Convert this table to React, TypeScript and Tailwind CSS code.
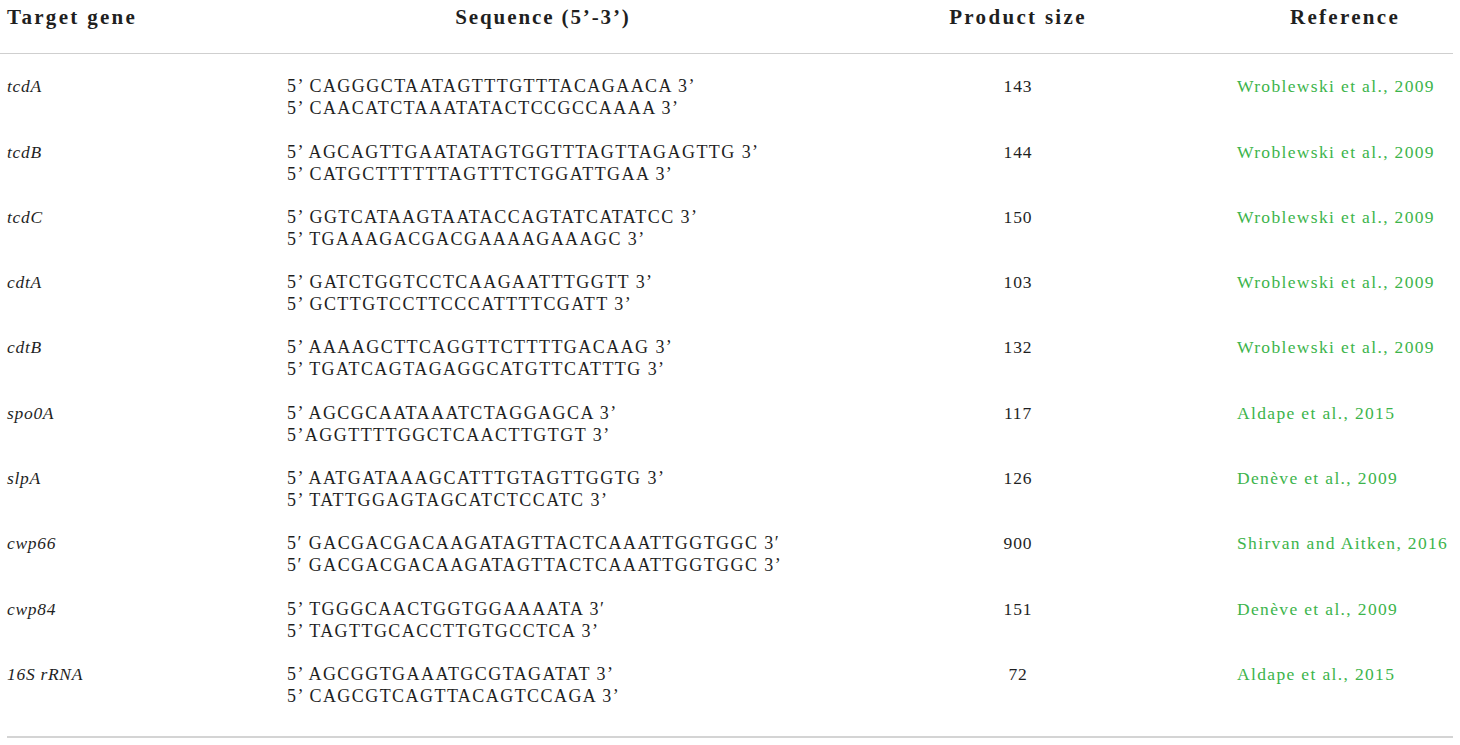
const rows = [
  { gene: "tcdA", seq: ["5’ CAGGGCTAATAGTTTGTTTACAGAACA 3’", "5’ CAACATCTAAATATACTCCGCCAAAA 3’"], size: "143", ref: "Wroblewski et al., 2009" },
  { gene: "tcdB", seq: ["5’ AGCAGTTGAATATAGTGGTTTAGTTAGAGTTG 3’", "5’ CATGCTTTTTTAGTTTCTGGATTGAA 3’"], size: "144", ref: "Wroblewski et al., 2009" },
  { gene: "tcdC", seq: ["5’ GGTCATAAGTAATACCAGTATCATATCC 3’", "5’ TGAAAGACGACGAAAAGAAAGC 3’"], size: "150", ref: "Wroblewski et al., 2009" },
  { gene: "cdtA", seq: ["5’ GATCTGGTCCTCAAGAATTTGGTT 3’", "5’ GCTTGTCCTTCCCATTTTCGATT 3’"], size: "103", ref: "Wroblewski et al., 2009" },
  { gene: "cdtB", seq: ["5’ AAAAGCTTCAGGTTCTTTTGACAAG 3’", "5’ TGATCAGTAGAGGCATGTTCATTTG 3’"], size: "132", ref: "Wroblewski et al., 2009" },
  { gene: "spo0A", seq: ["5’ AGCGCAATAAATCTAGGAGCA 3’", "5’AGGTTTTGGCTCAACTTGTGT 3’"], size: "117", ref: "Aldape et al., 2015" },
  { gene: "slpA", seq: ["5’ AATGATAAAGCATTTGTAGTTGGTG 3’", "5’ TATTGGAGTAGCATCTCCATC 3’"], size: "126", ref: "Denève et al., 2009" },
  { gene: "cwp66", seq: ["5′ GACGACGACAAGATAGTTACTCAAATTGGTGGC 3′", "5′ GACGACGACAAGATAGTTACTCAAATTGGTGGC 3’"], size: "900", ref: "Shirvan and Aitken, 2016" },
  { gene: "cwp84", seq: ["5’ TGGGCAACTGGTGGAAAATA 3′", "5’ TAGTTGCACCTTGTGCCTCA 3’"], size: "151", ref: "Denève et al., 2009" },
  { gene: "16S rRNA", seq: ["5’ AGCGGTGAAATGCGTAGATAT 3’", "5’ CAGCGTCAGTTACAGTCCAGA 3’"], size: "72", ref: "Aldape et al., 2015" },
];

export default function App() {
  return (
    <div className="w-[1460px] h-[745px] bg-white text-[#1f1f1f] font-['Liberation_Serif',serif] overflow-hidden">
      <div className="grid grid-cols-[280px_526px_424px_223px] w-[1453px] border-b border-[#cfcfcf] h-[54px] pt-[5px] text-[21px] font-bold leading-[24px] tracking-[0.11em]">
        <div className="pl-[7px]">Target gene</div>
        <div className="text-center tracking-[0.09em]">Sequence (5’-3’)</div>
        <div className="text-center">Product size</div>
        <div className="text-center pl-[7px]">Reference</div>
      </div>
      <div className="w-[1446px] ml-[7px] pb-[29px] border-b-2 border-[#d4d4d4]">
        {rows.map((r) => (
          <div key={r.gene} className="grid grid-cols-[280px_512px_438px_216px] pt-[21.3px] text-[18px] leading-[22px]">
            <div className="italic text-[17.5px] tracking-[0.04em]">{r.gene}</div>
            <div className="tracking-[0.08em]">
              <div>{r.seq[0]}</div>
              <div>{r.seq[1]}</div>
            </div>
            <div className="text-center text-[17.5px] tracking-[0.05em]">{r.size}</div>
            <div className="text-[#3cb44b] text-[17.5px] tracking-[0.077em]">{r.ref}</div>
          </div>
        ))}
      </div>
    </div>
  );
}
